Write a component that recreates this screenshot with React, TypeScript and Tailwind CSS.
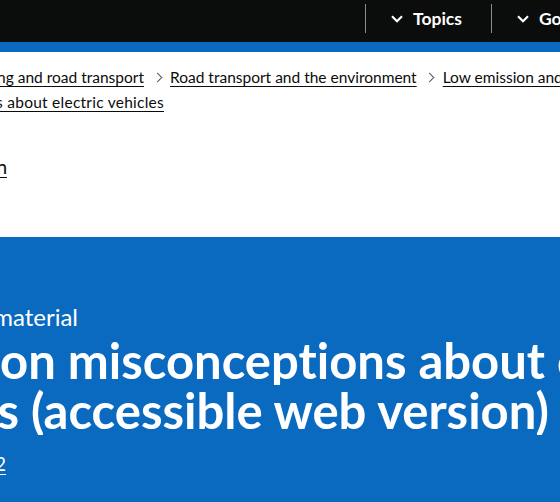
import React from "react";

function NavItem({ label }: { label: string }) {
  return (
    <div className="flex items-start shrink-0">
      <div className="w-px h-[29px] mt-[4px] bg-[#8a8c8c]" />
      <button className="h-[37px] flex items-center gap-[10px] pl-[25px] pr-[29px] text-white font-bold text-[17.5px] leading-none shrink-0 whitespace-nowrap">
        <svg width="12" height="8" viewBox="0 0 12 8" fill="none">
          <path d="M1 1.2 L6 6.2 L11 1.2" stroke="white" strokeWidth="2.2" />
        </svg>
        {label}
      </button>
    </div>
  );
}

function Chevron() {
  return (
    <span className="w-[26px] shrink-0 flex justify-center items-center">
      <span className="w-[7px] h-[7px] border-t border-r border-[#505a5f] rotate-45" />
    </span>
  );
}

const link = "underline decoration-1 underline-offset-[3px] shrink-0 whitespace-nowrap";

export default function App() {
  return (
    <div className="w-[560px] h-[502px] overflow-hidden bg-white flex flex-col whitespace-nowrap text-[#0b0c0c] [font-variant-ligatures:none] [font-family:Lato,'Liberation_Sans',sans-serif]">
      <header className="shrink-0 bg-[#0b0c0c] border-b-[10px] border-[#0a6abf]">
        <div className="h-[42px] flex items-start pl-[365px]">
          <NavItem label="Topics" />
          <NavItem label="Government activity" />
        </div>
      </header>

      <nav className="shrink-0 pt-[13px] text-[15.5px] leading-[25px]">
        <div className="flex items-center">
          <div className="w-[144px] shrink-0 flex justify-end overflow-hidden">
            <a className={link}>Driving and road transport</a>
          </div>
          <Chevron />
          <a className={link}>Road transport and the environment</a>
          <Chevron />
          <a className={link}>Low emission and ultra low emission vehicles</a>
        </div>
        <div className="w-[164px] flex justify-end overflow-hidden">
          <a className={`${link} tracking-[0.25px]`}>Common misconceptions about electric vehicles</a>
        </div>
      </nav>

      <div className="shrink-0 mt-[39px] w-[7px] flex justify-end overflow-hidden text-[19px] leading-[25px]">
        <a className={link}>Skip to contents of this publication</a>
      </div>

      <section className="mt-[58px] flex-1 bg-[#0a6abf] text-white pt-[65px]">
        <div className="w-[78px] flex justify-end overflow-hidden text-[24px] leading-[30px]">
          <span className="shrink-0">Promotional material</span>
        </div>
        <h1 className="mt-[3px] text-[49px] leading-[50px] font-bold">
          <div className="overflow-hidden">on misconceptions about electric</div>
          <div className="w-[549px] flex justify-end overflow-hidden">
            <span className="shrink-0">vehicles (accessible web version)</span>
          </div>
        </h1>
        <div className="mt-[16px] w-[6px] flex justify-end overflow-hidden text-[19px] leading-[25px]">
          <span className={link}>Published 10 March 2022</span>
        </div>
      </section>
    </div>
  );
}
